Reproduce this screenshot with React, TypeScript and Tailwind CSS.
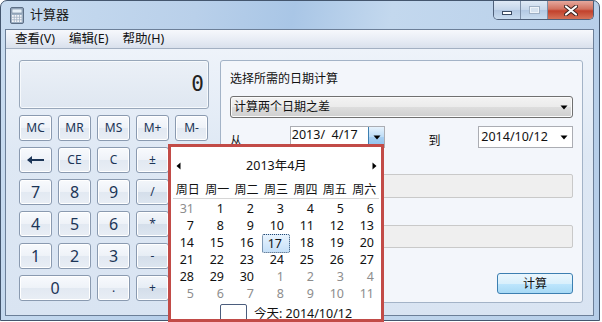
import React from 'react'

const cn = "font-['Noto_Sans','Noto_Sans_CJK_SC',sans-serif]"

function Key({ label, span = false, op = false, big = false, tall = false }: { label: React.ReactNode; span?: boolean; op?: boolean; big?: boolean; tall?: boolean }) {
  return (
    <div
      className={`${span ? 'col-span-2' : ''} ${tall ? 'row-span-2' : ''} flex items-center justify-center rounded-[3px] border border-[#8a9ab0] shadow-[inset_0_0_0_1px_#ffffff] ${
        op ? 'bg-[linear-gradient(#f3f6fa_0%,#e6edf5_50%,#d4deea_51%,#dde6f0_100%)]' : 'bg-[linear-gradient(#f8fafd_0%,#eef2f8_50%,#e2e9f2_51%,#e9eef5_100%)]'
      } ${big ? 'text-[16px]' : 'text-[12px]'} text-[#1c3557]`}
    >
      {label}
    </div>
  )
}

function Tri({ dir }: { dir: 'l' | 'r' | 'd' }) {
  if (dir === 'd')
    return (
      <svg width="8" height="5" viewBox="0 0 8 5"><path d="M0.5 0.5h7L4 4.5z" fill="#000" /></svg>
    )
  return (
    <svg width="5" height="8" viewBox="0 0 5 8">
      <path d={dir === 'l' ? 'M4.5 0.5v7L0.5 4z' : 'M0.5 0.5v7L4.5 4z'} fill="#000" />
    </svg>
  )
}

const weeks = [
  [31, 1, 2, 3, 4, 5, 6],
  [7, 8, 9, 10, 11, 12, 13],
  [14, 15, 16, 17, 18, 19, 20],
  [21, 22, 23, 24, 25, 26, 27],
  [28, 29, 30, 1, 2, 3, 4],
  [5, 6, 7, 8, 9, 10, 11],
]

export default function App() {
  return (
    <div className={`relative w-[602px] h-[322px] overflow-hidden bg-white ${cn}`}>
      <div className="w-[600px] h-[321px] flex flex-col rounded-t-[7px] border border-[#44566e] bg-[linear-gradient(100deg,#c9dcf0_0%,#b9d0ea_30%,#a9c6e6_45%,#c3d8ee_60%,#b5cde8_100%)]">
        {/* title bar */}
        <div className="h-[28px] flex items-start justify-between pr-[5px]">
          <div className="flex items-center h-[28px] pl-[9px] gap-[6px]">
            <svg width="14" height="17" viewBox="0 0 14 17">
              <rect x="0.5" y="0.5" width="13" height="16" rx="1.5" fill="#9fb1c4" stroke="#5d6f86" />
              <rect x="2" y="2" width="10" height="4" fill="#e6f0f8" stroke="#6f8299" strokeWidth="0.6" />
              {[0, 1, 2].map(r =>
                [0, 1, 2, 3].map(c => (
                  <rect key={`${r}${c}`} x={2 + c * 2.6} y={8 + r * 2.6} width="1.8" height="1.8" fill="#f4f6f9" />
                ))
              )}
            </svg>
            <span className="text-[13px] text-[#1b1b1b]">计算器</span>
          </div>
          <div className="flex h-[19px] rounded-b-[5px] border border-t-0 border-[#4f6079] overflow-hidden">
            <div className="w-[27px] flex items-end justify-center pb-[4px] border-r border-[#7c8ea6] bg-[linear-gradient(#dfe9f5,#c5d6ea_50%,#b3c8e2_51%,#c9dcef)]">
              <div className="w-[10px] h-[4px] bg-white border border-[#3b4b62]" />
            </div>
            <div className="w-[27px] flex items-center justify-center border-r border-[#7c8ea6] bg-[linear-gradient(#dfe9f5,#c5d6ea_50%,#b3c8e2_51%,#c9dcef)]">
              <div className="w-[11px] h-[8px] border border-[#9fb0c4] bg-[#d6e2ef] shadow-[inset_0_0_0_1px_#eef3f9]" />
            </div>
            <div className="w-[45px] flex items-center justify-center bg-[linear-gradient(#e5a89d,#d1715f_45%,#c2412c_55%,#d57359)]">
              <svg width="14" height="11" viewBox="0 0 14 11">
                <path d="M2 1.5l10 8M12 1.5l-10 8" stroke="#3a2320" strokeWidth="4" strokeLinecap="round" />
                <path d="M2 1.5l10 8M12 1.5l-10 8" stroke="#fff" strokeWidth="2.2" strokeLinecap="round" />
              </svg>
            </div>
          </div>
        </div>

        {/* client */}
        <div className="flex-1 ml-[4px] mr-[5px] mb-[4px] flex flex-col border border-[#6c7f98] bg-[#e2eaf5]">
          <div className="h-[19px] flex items-center gap-[14px] pl-[9px] border-b border-[#a3b0c2] bg-[linear-gradient(#f6f8fc,#e6ebf4_60%,#d9e0ec)] text-[12.5px] text-[#111]">
            <span>查看(V)</span>
            <span>编辑(E)</span>
            <span>帮助(H)</span>
          </div>

          <div className="flex-1 flex pl-[13px] pt-[11px] bg-[linear-gradient(#eef3fa,#dee8f4_40%,#d9e4f2)]">
            {/* calculator */}
            <div className="w-[190px] flex flex-col gap-[6px]">
              <div className="h-[49px] rounded-[3px] border border-[#98a7ba] bg-[linear-gradient(#ebf0f7,#dfe7f1)] shadow-[inset_0_0_0_1px_#f6f9fc] flex items-center justify-end pr-[4px]">
                <span className="font-['DejaVu_Sans_Mono',monospace] text-[21px] text-[#222] leading-none">0</span>
              </div>
              <div className="grid grid-cols-[repeat(5,33px)] auto-rows-[26px] gap-[6px]">
                <Key label="MC" />
                <Key label="MR" />
                <Key label="MS" />
                <Key label="M+" />
                <Key label="M-" />
                <Key
                  label={
                    <svg width="18" height="8" viewBox="0 0 18 8">
                      <path d="M1 4h16" stroke="#1c3557" strokeWidth="2" />
                      <path d="M0 4l5-4v8z" fill="#1c3557" />
                    </svg>
                  }
                />
                <Key label="CE" />
                <Key label="C" />
                <Key label="±" />
                <Key label="" />
                <Key label="7" big />
                <Key label="8" big />
                <Key label="9" big />
                <Key label="/" op />
                <Key label="" op />
                <Key label="4" big />
                <Key label="5" big />
                <Key label="6" big />
                <Key label="*" op />
                <Key label="" op />
                <Key label="1" big />
                <Key label="2" big />
                <Key label="3" big />
                <Key label="-" op />
                <Key label="" op tall />
                <Key label="0" big span />
                <Key label="." />
                <Key label="+" op />
              </div>
            </div>

            {/* date panel */}
            <div className="ml-[11px] w-[363px] h-[243px] rounded-[3px] border border-[#a3b3c7] bg-[#f3f6fb] flex flex-col px-[9px] text-[12px] text-[#111]">
              <div className="mt-[11px] h-[14px] leading-[14px]">选择所需的日期计算</div>
              <div className="mt-[10px] h-[22px] rounded-[3px] border border-[#707070] bg-[linear-gradient(#f3f3f3,#ebebeb_50%,#dddddd_51%,#cfcfcf)] shadow-[inset_0_0_0_1px_#fbfbfb] flex items-center justify-between pl-[3px] pr-[4px]">
                <span>计算两个日期之差</span>
                <Tri dir="d" />
              </div>
              <div className="mt-[8px] h-[22px] flex items-center">
                <span className="w-[60px] pt-[8px]">从</span>
                <div className="w-[96px] h-[22px] flex border border-[#abadb3] bg-white">
                  <span className="flex-1 pl-[1px] leading-[16px] text-[12.5px]">2013/&nbsp; 4/17</span>
                  <div className="w-[16px] flex items-center justify-center border-l border-[#3c7fb1] bg-[linear-gradient(#e6f2fc,#bcdcf6_50%,#a7cff2_51%,#8cc0ec)]">
                    <Tri dir="d" />
                  </div>
                </div>
                <span className="ml-[43px] w-[50px] pt-[8px]">到</span>
                <div className="w-[95px] h-[22px] flex items-center justify-between border border-[#abadb3] bg-white pl-[2px] pr-[4px]">
                  <span className="text-[12.5px]">2014/10/12</span>
                  <Tri dir="d" />
                </div>
              </div>
              <div className="mt-[26px] h-[24px] rounded-[2px] border border-[#c9c9c9] bg-[#efefef]" />
              <div className="mt-[27px] h-[23px] rounded-[2px] border border-[#c9c9c9] bg-[#efefef]" />
              <div className="mt-[25px] self-end w-[76px] h-[21px] rounded-[3px] border border-[#3c7fb1] bg-[linear-gradient(#eaf6fd,#d9f0fc_50%,#bee6fd_51%,#a7d9f5)] flex items-center justify-center">
                计算
              </div>
            </div>
          </div>
        </div>
      </div>

      {/* calendar popup */}
      <div className="absolute left-[168px] top-[144px] w-[216px] h-[178px] overflow-hidden border-[3px] border-[#c24b47] bg-white text-[12px] text-[#111]">
        <div className="mt-[10px] h-[18px] flex items-center justify-between pl-[5px] pr-[4px]">
          <Tri dir="l" />
          <span className="text-[12.5px]">2013年4月</span>
          <Tri dir="r" />
        </div>
        <div className="mt-[7px] mx-[2px] h-[17px] grid grid-cols-7 border-b border-[#d6d6d6]">
          {['周日', '周一', '周二', '周三', '周四', '周五', '周六'].map(d => (
            <span key={d} className="text-center leading-[16px] -mx-[2px]">{d}</span>
          ))}
        </div>
        <div className="mt-[1px] flex flex-col">
          {weeks.map((w, i) => (
            <div key={i} className="h-[17px] grid grid-cols-7">
              {w.map((d, j) => {
                const gray = (i === 0 && d > 20) || (i >= 4 && d < 15)
                const sel = i === 2 && d === 17
                return (
                  <span
                    key={j}
                    className={`text-right pr-[7px] leading-[17px] text-[12.5px] ${gray ? 'text-[#8d8d8d]' : ''} ${
                      sel ? 'mx-[1px] pr-[6px] rounded-[2px] border border-dotted border-[#27496f] bg-[linear-gradient(#e8f3fd,#c6e0f8)] leading-[15px]' : ''
                    }`}
                  >
                    {d}
                  </span>
                )
              })}
            </div>
          ))}
        </div>
        <div className="mt-[2px] flex items-start">
          <div className="ml-[49px] w-[27px] h-[18px] rounded-[2px] border border-[#4b5d7d]" />
          <span className="ml-[7px] mt-[1px] text-[12.5px]">今天: 2014/10/12</span>
        </div>
      </div>
    </div>
  )
}
